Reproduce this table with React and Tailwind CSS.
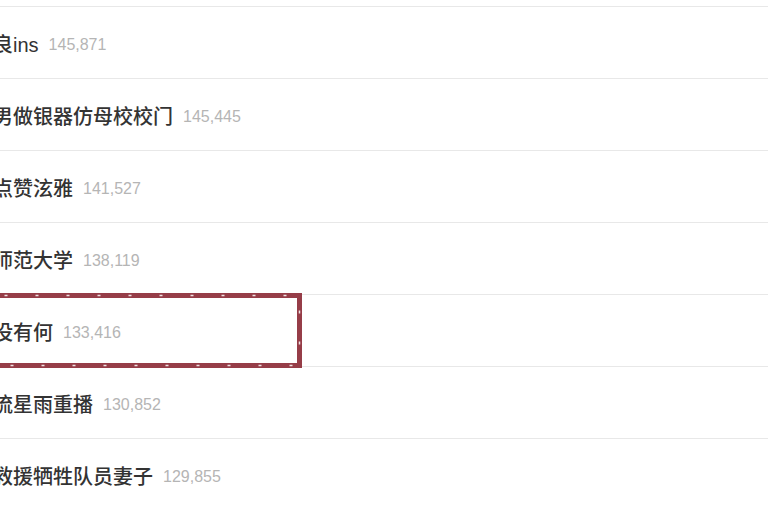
import React from "react";

const rows = [
  { t: "", n: "" },
  { t: "良ins", n: "145,871" },
  { t: "男做银器仿母校校门", n: "145,445" },
  { t: "点赞泫雅", n: "141,527" },
  { t: "师范大学", n: "138,119" },
  { t: "没有何", n: "133,416" },
  { t: "流星雨重播", n: "130,852" },
  { t: "救援牺牲队员妻子", n: "129,855" },
];

export default function App() {
  return (
    <div className="relative w-[768px] h-[510px] overflow-hidden bg-white" style={{ fontFamily: '"Liberation Sans", "Noto Sans CJK SC", sans-serif' }}>
      <div className="mt-[-65px] ml-[-7px]">
        {rows.map((r, i) => (
          <div key={i} className="h-[72px] pt-[4px] flex items-center gap-[10px] border-b border-[#e8e8e8]">
            <span className="text-[20px] font-medium text-[#333333] leading-none">{r.t}</span>
            <span className="text-[16px] text-[#b5b5b5] leading-none">{r.n}</span>
          </div>
        ))}
      </div>
      <div className="absolute left-[-10px] top-[293px] w-[312px] h-[75px] border-[5px] border-[#963d48]">
        <svg className="absolute inset-[-5px]" width="312" height="75" viewBox="0 0 312 75">
          <rect x="2.5" y="2.5" width="307" height="70" fill="none" stroke="#ffffff" strokeWidth="1.5" strokeDasharray="3 28" strokeDashoffset="-12" opacity="0.85" />
        </svg>
      </div>
    </div>
  );
}
